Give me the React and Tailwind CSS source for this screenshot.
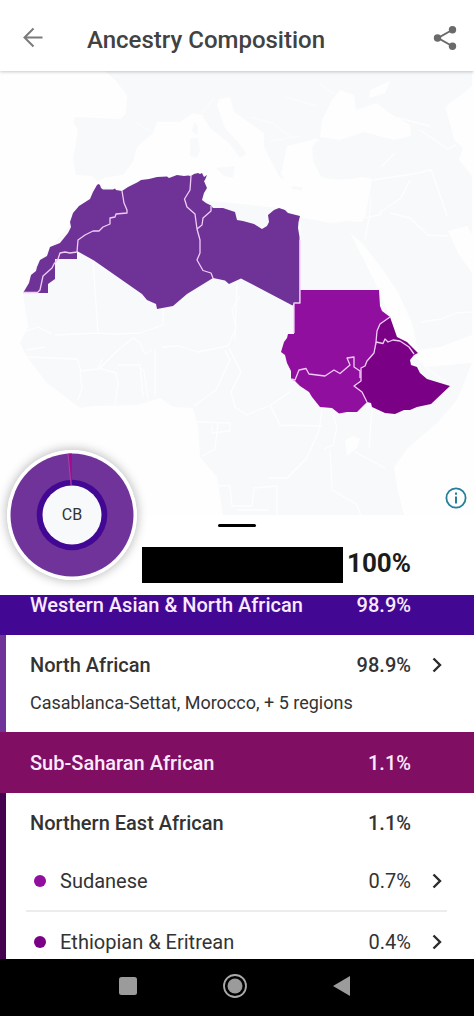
import React from "react";

function Chevron() {
  return (
    <svg viewBox="0 0 12 18" className="h-[18px] w-3 shrink-0" fill="none" stroke="#2b2b2b" strokeWidth="2.4" aria-hidden="true">
      <path d="M2.500 2.500 9 9 2.500 15.500" />
    </svg>
  );
}

function Header() {
  return (
    <header className="relative z-10 flex h-[71px] items-center bg-white pt-1 pr-4 pl-[22px] shadow-[0_1px_3px_rgba(60,70,80,0.28)]">
      <button type="button" aria-label="Back">
        <svg viewBox="0 0 22 22" className="size-[22px]" fill="none" stroke="#7b7b7b" strokeWidth="2">
          <path d="M11.5 1.500 2.500 10.500l9 9M2.500 10.500h18" />
        </svg>
      </button>
      <h1 className="ml-[43px] flex-1 pt-1 text-2xl leading-8 font-medium text-[#424242]">Ancestry Composition</h1>
      <button type="button" aria-label="Share">
        <svg viewBox="0 0 26 26" className="size-[26px]" fill="#6a6a6a">
          <path d="M21 4.500 6 13l15 8.500" fill="none" stroke="#6a6a6a" strokeWidth="2" />
          <circle cx="20.500" cy="4.800" r="3.700" />
          <circle cx="5.500" cy="13" r="3.700" />
          <circle cx="20.500" cy="21.200" r="3.700" />
        </svg>
      </button>
    </header>
  );
}

function RegionMap() {
  return (
    <svg viewBox="0 71 474 444" className="block h-auto w-full" role="img" aria-label="Map of North and East Africa" strokeLinejoin="round">
      <rect y="71" width="474" height="444" fill="#fefefe" />
      <g fill="#f7f9fb">
        <path d="M105 71 115 80 127 95 126 113 121 119 75 117 73 122 78 130 73 160 76 175 92 176 98 182 104 178 123 175 133 162 137 147 153 133 157 122 180 122 193 113 202 115 210 128 230 144 240 158 246 154 243 148 236 140 225 128 217 105 219 99 230 97 234 112 247 121 264 133 264 147 274 167 280 178 290 180 296 172 290 160 287 146 304 142 318 138 312 148 312 163 320 177 340 181 362 177 372 179 370 192 365 217 362 222 350 221 330 223 300 217 280 208 200 200 180 176 122 191 97 185 70 225 38 262 23 293 28 327 20 343 27 357 47 383 80 408 94 406 137 405 160 398 173 407 193 408 198 427 200 457 217 477 223 515 404 515 397 487 394 467 408 448 437 423 457 400 472 363 425 367 414 355 397 337 390 317 380 293 364 260 350 233 362 243 383 270 398 292 412 323 418 350 440 347 472 335 472 71Z" />
        <path d="M194 122 198 126 197 135 192 131ZM190 139l8-1 2 12-3 8-7-2ZM216 168l19-2-2 12-9-2ZM292 186l17 2-5 3-12-2ZM349 190l13-4-5 5-7 1Z" />
      </g>
      <g fill="#fefefe">
        <path d="M320 137 322 120 332 100 340 90 354 95 356 110 377 103 388 112 410 125 411 136 394 140 364 132 340 140Z" />
        <path d="M369 98 370 90 390 81 385 93Z" />
        <path d="M445 107 472 86v90l-13-16 4-12-9-8-4-17ZM448 231l19-5 5 8v39l-14-20ZM345 440l8-4 7 3-3 9-10 8Z" />
        <path d="M98 182 104 178 123 175 135 170 180 176 122 191Z" />
        <path d="M287 146l25-3 1 18 8 16-31 9-9-12Z" />
        <path d="M303 180l68-1-6 38-5 5-60-6Z" />
      </g>
      <g fill="none" stroke="#fefefe" strokeWidth="1.300">
        <path d="M93 260l5 73-43 2M98 333l14 1 28-1 23-8v-18M100 368l18-18 15-12 7 5 5 11 7-4M52 334l-14-7-12 4M27 350l18-3M27 357l50 2 4 12 17-2 4-10M80 370l2 18-4 12M98 368l18 5 2 10-3 22M118 365h22l3 32M140 368l4 3 4 28M155 350v46M162 347l16-1 20 6 30-6 8-18-4-18 8-14M225 350l5 10-14 30-22 16M229 348l12 24-10 20 4 15 12 8 24-10 20-14M237 280l-2 60M197 422l33 1v8l-18 2v-8M270 405l10 20 42 1M322 410l-3 20-12 28-20 20h-18M333 415l4 12-4 18-9 4M372 408l-3 40M330 450l2 40 24 14 5 11M355 452l30 16M200 485l30 1 2 20h20l2-18 23-2v29M237 510h32" />
        <path d="M320 140l-10 4M373 180l40-6 18-4 8 22 8 24M379 213l22-15 9-18M371 197l-2 22-4 20M390 213l20 5 18 17 20 1M366 218l16-4M300 217v72M421 322l20-3 15-6 16-1M381 167l14-14M420 130l28 19 8-4M398 118l32 8M218 423l-3 26-13 7M425 367l22 16" />
        <path d="M153 133l-18-11M202 113l12-15M320 84l14 10M250 117l22 6 22 16M270 141l30-5M285 97l32 9" opacity=".65" />
      </g>
      <path
        fill="#6f3398"
        d="M97 185 98.500 184 100 185 101 188 103 189.500 113 189.500 115 188.500 116 190 122 191 128 187 133 184.500 138 182 141 180 149 179 157 177 167 176.500 169 178 177 175 184 176 188 175.500 191 176 194 174 198 173 200 174 202 173 204 177 207 175 205 180 204 181 207 188 204 193 202 200 206 203 211 205.500 213 208 223 208 235 212 237 220 243 221 254 224 262 229 267 226 269 222 268 215 274 210 279 208 285 210 288 213 300 216 298.500 222 298 228 299.500 237V303H294L292.500 305.500 241 278.500 229 284 225 280.500 213 278 187 294 173 306 157 309 156 304 147 300 142 294 94 260.500 77 251V259H55V279L48 284V293H23L29 283 31 275 36 271 37 267 40 260 47 256 50 247 60 243 68 233 71 227 70 222 73 213 79 206 90 199 93 192Z"
      />
      <path fill="#910f9f" d="M300 290H379L380 306 382 311 390 317 380 324 377 331 377 342 374 353 367 361 365 366 361 368 361 381 354 386 362 392 367 402 357 412 347 412 339 413.500 332 408 320 407 312 397 309 392 300 386 295 381 291 379V371L287 363 285 355 281 352 284 342 287 338 288 334H294V303H300Z" />
      <path fill="#7a0086" d="M390 317 397 337 407 342 418 353 414 355 410 360 411 365 417 367 420 373 427 379 450 386 431 404 417 407 410 410 404 410 395 414 385 413 372 407 371 403 367 402 362 392 354 386 361 381 361 368 365 366 367 361 374 353 377 342 377 331 380 324Z" />
      <g fill="none" stroke="#f0cdf5" strokeWidth="1.300">
        <path d="M122 191 124 203 127 210 127 213 116 214 115 217 110 218 110 224 103 227 99 231 93 231 85 235 78 240 77 252 70 253 65 252 60 253 58 259 54 264 52 268 43 276 40 290 37 293M23 292.500H38" />
        <path d="M191 176 190 190 184.500 199 187 207 195 214 197 229 200 240 200 253 197 260 203 270.500 211 273 213 278M211 206V211L203 218 202 225 197 229" />
        <path d="M300 240V303H294V333M291 379 295 380 299 370 306 368.500 309 374 325 376 334 370 340 373.500 350 365 347 358 354 357 354 367 360 371 360 378" />
        <path d="M390 317 380 324 377 331 376 342 374 353 367 361 365 366 361 368 361 381 354 386 362 392 367 402M376 342 383 343.500 385 339 388 342 393 340 400 341 409 347 414 354" />
      </g>
    </svg>
  );
}

function Donut() {
  return (
    <svg viewBox="0 0 130 130" className="size-[130px] rounded-full shadow-[0_0_8px_2px_rgba(70,75,70,0.3)]" role="img" aria-label="Ancestry share, CB">
      <circle cx="65" cy="65" r="65" fill="#fff" />
      <circle cx="65" cy="65" r="61.500" fill="#703399" />
      <circle cx="65" cy="65" r="35.300" fill="#420894" />
      <path d="M61.200 3.600 65 3.500V35H63.800Z" fill="#a00d91" />
      <path d="M61 3.600 64 35" stroke="#ad4ba9" strokeWidth=".8" />
      <circle cx="65" cy="65" r="29.500" fill="#f7f9fb" />
      <text x="65" y="70" textAnchor="middle" fontFamily="Roboto, sans-serif" fontSize="16" fill="#333">CB</text>
    </svg>
  );
}

function Band({ name, value, className }) {
  return (
    <div className={"flex justify-between pr-[63px] pl-[30px] text-xl font-medium text-[#faeaff] " + className}>
      <h2>{name}</h2>
      <span>{value}</span>
    </div>
  );
}

function SubRegion({ name, value, dot, className }) {
  return (
    <button type="button" className={"flex items-center pr-1 pl-2 text-left text-xl text-[#333] " + className}>
      <span className={"mr-[14px] size-3 rounded-full " + dot} />
      <span className="flex-1">{name}</span>
      <span className="mr-5">{value}</span>
      <Chevron />
    </button>
  );
}

export default function App() {
  return (
    <div className="flex min-h-screen flex-col bg-white font-['Roboto',sans-serif]">
      <Header />
      <div className="relative">
        <RegionMap />
        <div className="absolute -bottom-[65px] left-[7px] z-10">
          <Donut />
        </div>
        <button type="button" aria-label="About this map" className="absolute right-[7px] bottom-[6px]">
          <svg viewBox="0 0 22 22" className="size-[22px]" fill="none" stroke="#24809a" strokeWidth="1.800">
            <circle cx="11" cy="11" r="9.600" />
            <path d="M11 9.500V16.500M11 5.500V7.800" strokeWidth="2" />
          </svg>
        </button>
      </div>

      <section className="flex h-20 flex-col shadow-[0_-1px_4px_rgba(0,0,0,0.06)]">
        <div className="mt-[9px] h-[3px] w-[38px] self-center rounded-full bg-black" />
        <div className="mt-5 flex items-center justify-end pr-[63px]">
          <div className="h-9 w-[201px] bg-black" />
          <span className="ml-1 -mt-2 pt-1 text-[26px] leading-8 font-bold text-[#1c1c1c]">100%</span>
        </div>
      </section>

      <main className="flex flex-1 flex-col">
        <Band name="Western Asian & North African" value="98.9%" className="h-10 bg-[#420894] leading-5" />
        <button type="button" className="flex h-[97px] flex-col border-l-6 border-[#703399] pt-4 pr-[31px] pl-6 text-left text-[#333]">
          <span className="flex w-full items-center text-xl leading-7 font-medium">
            <span className="flex-1">North African</span>
            <span className="mr-5">98.9%</span>
            <Chevron />
          </span>
          <span className="mt-3 text-lg leading-6">Casablanca-Settat, Morocco, + 5 regions</span>
        </button>
        <Band name="Sub-Saharan African" value="1.1%" className="h-[61px] items-center bg-[#800e62]" />
        <div className="flex flex-1 flex-col border-l-6 border-[#460050] pr-[27px] pl-5">
          <div className="flex h-[59px] items-center justify-between pr-9 pl-1 text-xl font-medium text-[#333]">
            <h3>Northern East African</h3>
            <span>1.1%</span>
          </div>
          <SubRegion name="Sudanese" value="0.7%" dot="bg-[#910f9f]" className="h-[60px] border-b-2 border-[#ececec]" />
          <SubRegion name="Ethiopian & Eritrean" value="0.4%" dot="bg-[#7a0086]" className="h-[47px] pt-3" />
        </div>
      </main>

      <nav aria-label="System" className="flex h-[57px] items-start justify-center gap-[81px] bg-black pt-[14px] pr-1">
        <button type="button" aria-label="Recent apps">
          <svg viewBox="0 0 26 26" className="size-[26px]" fill="#9b9b9b"><rect x="4" y="4" width="18" height="18" rx="2.500" /></svg>
        </button>
        <button type="button" aria-label="Home">
          <svg viewBox="0 0 26 26" className="size-[26px]">
            <circle cx="13" cy="13" r="11" fill="none" stroke="#aaa" strokeWidth="1.800" />
            <circle cx="13" cy="13" r="7.500" fill="#9b9b9b" />
          </svg>
        </button>
        <button type="button" aria-label="Back">
          <svg viewBox="0 0 26 26" className="size-[26px]" fill="#9b9b9b"><path d="M21 3V23L4 13Z" /></svg>
        </button>
      </nav>
    </div>
  );
}
